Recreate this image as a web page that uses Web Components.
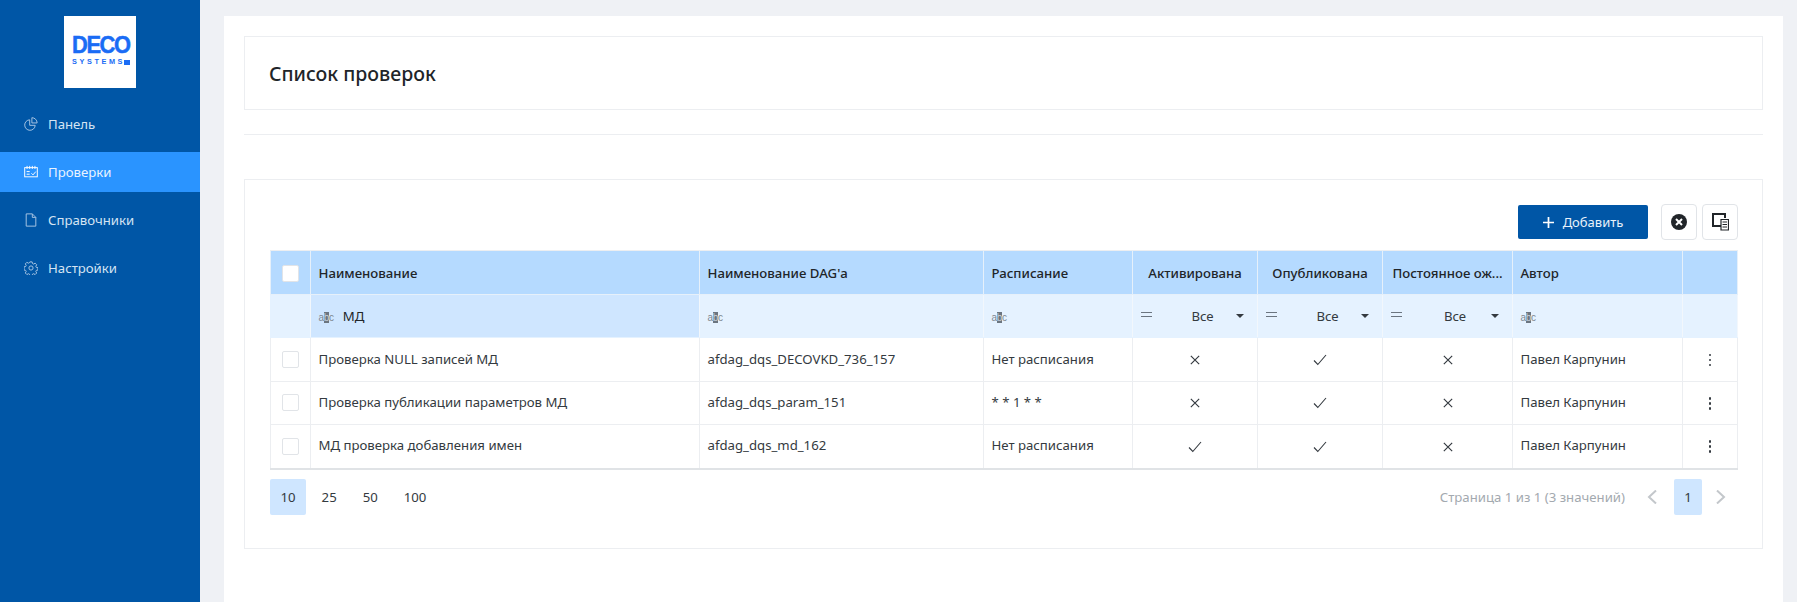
<!DOCTYPE html>
<html lang="ru">
<head>
<meta charset="utf-8">
<title>Список проверок</title>
<style>
  html, body { margin: 0; height: 100%; }
  body { font: 13.2px "Noto Sans", "Open Sans", sans-serif; color: #212529; background: #eff1f5; overflow: hidden; }
</style>
</head>
<body>
<app-shell>
  <side-bar slot="side">
    <nav-item icon="pie">Панель</nav-item>
    <nav-item icon="cal" active>Проверки</nav-item>
    <nav-item icon="doc">Справочники</nav-item>
    <nav-item icon="gear">Настройки</nav-item>
  </side-bar>
  <title-card slot="head">Список проверок</title-card>
  <checks-table></checks-table>
</app-shell>

<script>
const ICONS = {
  pie: '<path d="M6.5 3.2a6 6 0 1 0 6.3 6.3H6.5z"/><path d="M9 .8a6 6 0 0 1 6 6H9z"/>',
  cal: '<rect x=".8" y="3" width="14.4" height="10.5"/><path d="M3.5 1v3.5M6.5 1v3.5M9.5 1v3.5M12.5 1v3.5M3 7.5h3.5M3 10.5h3.5M8.5 9.5l1.8 1.8L13.5 7.5"/>',
  doc: '<path d="M2.5 1h7l4 4v10h-11zM9.5 1v4h4"/>',
  gear: '<circle cx="8" cy="8" r="2.4"/><path d="M6.7 1h2.6l.4 1.9 1.3.6 1.7-1 1.8 1.8-1 1.7.6 1.3 1.9.4v2.6l-1.9.4-.6 1.3 1 1.7-1.8 1.8-1.7-1-1.3.6-.4 1.9H6.7l-.4-1.9-1.3-.6-1.7 1-1.8-1.8 1-1.7-.6-1.3-1.9-.4V6.7l1.9-.4.6-1.3-1-1.7 1.8-1.8 1.7 1 1.3-.6z"/>'
};

class AppShell extends HTMLElement {
  constructor() {
    super();
    let root = this.attachShadow({ mode: 'open' });
    root.innerHTML = `<style>
      :host { display: flex; height: 602px; }
      main { flex: 1; min-width: 0; padding: 16px 14px 0 24px; display: flex; }
      .sheet { flex: 1; background: #fff; padding: 20px 20px 0 20px; min-width: 0; }
      .rule { border-top: 1px solid #eceef1; margin: 24px 0 44px; }
    </style>
    <slot name="side"></slot>
    <main><div class="sheet"><slot name="head"></slot><div class="rule"></div><slot></slot></div></main>`;
  }
}

class SideBar extends HTMLElement {
  constructor() {
    super();
    let root = this.attachShadow({ mode: 'open' });
    root.innerHTML = `<style>
      :host { display: flex; flex-direction: column; width: 200px; flex: none; background: #0056a6; }
      .logo { width: 72px; height: 72px; margin: 16px auto; background: #fff; box-sizing: border-box; padding: 21px 0 0 8px; color: #1a6cf5; font-family: "Liberation Sans", sans-serif; font-weight: 700; }
      .deco { display: block; font-size: 23.5px; line-height: 17px; letter-spacing: -1.5px; transform: scaleX(.93); transform-origin: 0 0; -webkit-text-stroke: .5px #1a6cf5; }
      .sys { display: flex; align-items: center; font-size: 7.3px; line-height: 6px; letter-spacing: 2.6px; margin-top: 5px; }
      .sys i { width: 6px; height: 5px; background: #1a6cf5; margin-left: -1px; }
      nav { display: flex; flex-direction: column; gap: 8px; }
    </style>
    <div class="logo"><span class="deco">DECO</span><span class="sys">SYSTEMS<i></i></span></div>
    <nav><slot></slot></nav>`;
  }
}

class NavItem extends HTMLElement {
  constructor() {
    super();
    let root = this.attachShadow({ mode: 'open' });
    root.innerHTML = `<style>
      :host { display: flex; align-items: center; height: 40px; padding-left: 24px; gap: 10px; color: #d5e4f3; font-size: 13.2px; }
      :host([active]) { background: #2a94ff; color: #e8f3ff; }
      svg { width: 14px; height: 14px; fill: none; stroke: #a9c6e4; stroke-width: 1.1; flex: none; }
      :host([active]) svg { stroke: #fff; }
    </style>
    <svg viewBox="0 0 16 16"></svg><slot></slot>`;
  }
  connectedCallback() {
    this.shadowRoot.querySelector('svg').innerHTML = ICONS[this.getAttribute('icon')] || '';
  }
}

class TitleCard extends HTMLElement {
  constructor() {
    super();
    let root = this.attachShadow({ mode: 'open' });
    root.innerHTML = `<style>
      :host { display: flex; align-items: center; height: 71px; padding: 1px 0 0 24px; border: 1px solid #eceef1; font-size: 19.5px; font-weight: 500; color: #212529; }
    </style><slot></slot>`;
  }
}

const ABC = '<span class="abc">a<b>b</b>c</span>';
const CROSS = '<svg class="mark" viewBox="0 0 12 12"><path d="M1 1l10 10M11 1L1 11"/></svg>';
const CHECK = '<svg class="mark chk" viewBox="0 0 14 12"><path d="M1 6.5l3.8 4L13 1"/></svg>';
const EQ = '<span class="eq"></span>';
const ROWS = [
  ['Проверка NULL записей МД', 'afdag_dqs_DECOVKD_736_157', 'Нет расписания', 0, 1, 0],
  ['Проверка публикации параметров МД', 'afdag_dqs_param_151', '* * 1 * *', 0, 1, 0],
  ['МД проверка добавления имен', 'afdag_dqs_md_162', 'Нет расписания', 1, 1, 0],
];

class ChecksTable extends HTMLElement {
  constructor() {
    super();
    let root = this.attachShadow({ mode: 'open' });
    let select = `<td class="sel">${EQ}<span class="val">Все</span><span class="caret"></span></td>`;
    let rows = ROWS.map((r) => `<tr class="row">
      <td class="c"><span class="box"></span></td>
      <td>${r[0]}</td><td>${r[1]}</td><td>${r[2]}</td>
      <td class="c">${r[3] ? CHECK : CROSS}</td>
      <td class="c">${r[4] ? CHECK : CROSS}</td>
      <td class="c">${r[5] ? CHECK : CROSS}</td>
      <td>Павел Карпунин</td>
      <td class="c"><span class="dots"><i></i><i></i><i></i></span></td>
    </tr>`).join('');
    root.innerHTML = `<style>
      :host { display: block; height: 370px; box-sizing: border-box; border: 1px solid #eceef1; padding: 24px 24px 0 25px; color: #343a40; }
      .tools { display: flex; justify-content: flex-end; align-items: center; gap: 5px; height: 36px; margin-bottom: 10px; }
      .add { width: 130px; height: 34px; margin-right: 8px; background: #0056a6; color: #e8f1fa; border-radius: 2px; display: flex; align-items: center; justify-content: center; gap: 9px; font-size: 13px; }
      .add svg { width: 11px; height: 11px; stroke: #fff; stroke-width: 2.2; }
      .ibtn { width: 36px; height: 36px; box-sizing: border-box; border: 1px solid #e1e4e8; border-radius: 4px; display: flex; align-items: center; justify-content: center; }
      table { width: 1467px; border-collapse: collapse; table-layout: fixed; }
      th, td { border: 1px solid #eceef1; padding: 0 7.5px; height: 43px; box-sizing: border-box; white-space: nowrap; font-weight: 400; text-align: left; }
      .row td { padding-bottom: 2px; }
      thead th { background: #b5daff; height: 44px; color: #212529; font-weight: 500; border-color: #e6f0fa; border-top-color: #eceef1; }
      thead th.c { text-align: center; padding: 0; }
      .filter td { background: #e5f2ff; height: 43px; border-color: #e5f2ff; border-right-color: #f2f7fc; }
      .filter td.on { background: #cfe6ff; color: #212529; }
      .c { text-align: center; }
      .filter + .row td { height: 44px; }
      tbody tr:last-child td { height: 44px; border-bottom: 2px solid #e0e3e6; }
      .box { display: inline-block; vertical-align: middle; width: 15px; height: 15px; border: 1px solid #e1e4e8; border-radius: 2px; background: #fff; }
      .abc { display: inline-block; font: 10px/11px "Liberation Sans", sans-serif; color: #7d8790; letter-spacing: -.3px; vertical-align: middle; }
      .abc b { font-weight: 400; background: #6b7580; color: #c9d4de; }
      .on .abc { margin-right: 9px; }
      .mark { display: inline-block; vertical-align: middle; width: 10px; height: 10px; fill: none; stroke: #343a40; stroke-width: 1.4; }
      .chk { width: 14px; height: 12px; stroke-width: 1.1; }
      .dots { display: inline-flex; flex-direction: column; gap: 2.5px; vertical-align: middle; }
      .dots i { width: 2.5px; height: 2.5px; background: #343a40; border-radius: 50%; }
      .sel { padding: 0 0 0 15px; position: relative; }
      .eq { position: absolute; left: 8px; top: 17px; width: 11px; height: 3px; border-top: 1px solid #6b7580; border-bottom: 1px solid #6b7580; }
      .val { display: block; text-align: center; }
      .caret { position: absolute; right: 13px; top: 19px; border: 4px solid transparent; border-top-color: #343a40; border-bottom: 0; }
      .pager { display: flex; align-items: center; gap: 5px; height: 36px; margin-top: 9px; }
      .pg { height: 36px; box-sizing: border-box; padding: 0 10.5px; display: flex; align-items: center; justify-content: center; border-radius: 2px; }
      .cur { background: #cfe6ff; }
      .info { margin-left: auto; color: #a3a9af; margin-right: 17px; }
      .arrow { width: 10px; height: 14px; fill: none; stroke: #c3c7cb; stroke-width: 2; }
      .one { width: 28px; padding: 0; margin: 0 9px 0 12px; }
      .arrow:last-child { margin-right: 12px; }
    </style>
    <div class="tools">
      <div class="add"><svg viewBox="0 0 14 14"><path d="M7 0v14M0 7h14"/></svg>Добавить</div>
      <div class="ibtn"><svg width="16" height="16" viewBox="0 0 16 16"><circle cx="8" cy="8" r="8" fill="#212529"/><path d="M5 5l6 6M11 5l-6 6" stroke="#fff" stroke-width="2"/></svg></div>
      <div class="ibtn"><svg width="17" height="18" viewBox="0 0 17 18" fill="none" stroke="#212529"><path d="M9 13H1V1h12v4" stroke-width="2"/><path d="M9 6.500h7.500V17H9z" fill="#fff" stroke-width="1.2"/><path d="M10.500 9h4.500M10.500 11.500h4.500M10.500 14h4.500" stroke-width="1.2"/></svg></div>
    </div>
    <table>
      <colgroup><col style="width:40px"><col style="width:389px"><col style="width:284px"><col style="width:149px"><col style="width:125px"><col style="width:125px"><col style="width:130px"><col style="width:170px"><col style="width:55px"></colgroup>
      <thead><tr>
        <th class="c"><span class="box"></span></th><th>Наименование</th><th>Наименование DAG'а</th><th>Расписание</th>
        <th class="c">Активирована</th><th class="c">Опубликована</th><th class="c">Постоянное ож...</th><th>Автор</th><th></th>
      </tr></thead>
      <tbody>
        <tr class="filter">
          <td></td><td class="on">${ABC}МД</td><td>${ABC}</td><td>${ABC}</td>${select}${select}${select}<td>${ABC}</td><td></td>
        </tr>
        ${rows}
      </tbody>
    </table>
    <div class="pager">
      <div class="pg cur">10</div><div class="pg">25</div><div class="pg">50</div><div class="pg">100</div>
      <span class="info">Страница 1 из 1 (3 значений)</span>
      <svg class="arrow" viewBox="0 0 10 14"><path d="M9 .5L2 7l7 6.500"/></svg>
      <div class="pg cur one">1</div>
      <svg class="arrow" viewBox="0 0 10 14"><path d="M1 .5L8 7l-7 6.500"/></svg>
    </div>`;
  }
}

customElements.define('app-shell', AppShell);
customElements.define('side-bar', SideBar);
customElements.define('nav-item', NavItem);
customElements.define('title-card', TitleCard);
customElements.define('checks-table', ChecksTable);
</script>
</body>
</html>
